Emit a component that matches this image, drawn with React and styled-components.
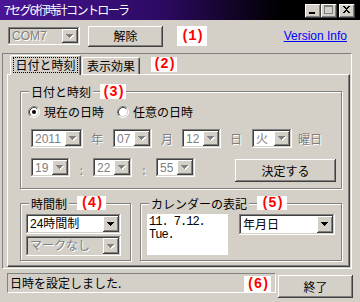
import React from 'react';
import styled, { createGlobalStyle, css } from 'styled-components';

const Global = createGlobalStyle`
  html, body { margin: 0; padding: 0; background: #d4d0c8; }
  body {
    font-family: "Liberation Sans", "Noto Sans CJK JP", sans-serif;
    font-size: 12px;
    color: #000;
  }
`;

const raised = css`
  box-shadow: inset -1px -1px #404040, inset 1px 1px #fff, inset -2px -2px #808080, inset 2px 2px #d4d0c8;
`;
const sunken = css`
  box-shadow: inset -1px -1px #fff, inset 1px 1px #808080, inset -2px -2px #d4d0c8, inset 2px 2px #404040;
`;

const px = v => (typeof v === 'number' ? `${v}px` : v || '0');

const Window = styled.div`
  width: 360px;
  height: 302px;
  display: flex;
  flex-direction: column;
  overflow: hidden;
  background: #d4d0c8;
`;

const TitleBar = styled.div`
  height: 20px;
  flex: none;
  display: flex;
  align-items: flex-start;
  background: linear-gradient(90deg, #4a1698 0%, #2c0a62 45%, #000 78%);
  color: #fff;
  padding-left: 4px;
`;

const TitleText = styled.span`
  flex: 1;
  font-family: "Noto Sans CJK JP", sans-serif;
  font-size: 12px;
  line-height: 19px;
  letter-spacing: -1.6px;
  white-space: nowrap;
`;

const TitleButtons = styled.div`
  display: flex;
  margin-top: 4px;
  margin-right: 5px;
`;

const TitleBtn = styled.div`
  width: 16px;
  height: 14px;
  box-sizing: border-box;
  background: #d4d0c8;
  margin-left: ${p => (p.$gap ? 2 : 0)}px;
  display: flex;
  ${raised}
  svg { display: block; }
`;

const TopRow = styled.div`
  display: flex;
  align-items: center;
  height: 22px;
  margin-top: 5px;
  padding-left: 8px;
`;

const ComboBox = styled.div`
  width: ${p => p.$w}px;
  height: ${p => p.$h}px;
  margin-left: ${p => p.$ml || 0}px;
  margin-top: ${p => p.$mt || 0}px;
  flex: none;
  box-sizing: border-box;
  padding: 2px;
  display: flex;
  background: ${p => p.$bg};
  ${sunken}
`;

const ComboText = styled.div`
  flex: 1;
  min-width: 0;
  padding-left: 2px;
  display: flex;
  align-items: center;
  white-space: nowrap;
  overflow: hidden;
  line-height: 14px;
  color: ${p => (p.$disabled ? '#808080' : '#000')};
  text-shadow: ${p => (p.$disabled ? '1px 1px #fff' : 'none')};
`;

const ComboArrow = styled.div`
  width: 16px;
  flex: none;
  background: #d4d0c8;
  display: flex;
  align-items: center;
  justify-content: center;
  ${raised}
  svg { display: block; }
`;

const PushButton = styled.button`
  width: ${p => p.$w}px;
  height: ${p => p.$h}px;
  margin-left: ${p => p.$ml || 0}px;
  margin-top: ${p => p.$mt || 0}px;
  flex: none;
  border: 0;
  padding: 0;
  background: #d4d0c8;
  font-family: "Noto Sans CJK JP", sans-serif;
  font-size: 12px;
  line-height: 14px;
  color: #000;
  ${raised}
`;

const Tag = styled.div`
  width: ${p => p.$w}px;
  height: ${p => p.$h}px;
  margin-left: ${p => px(p.$ml)};
  flex: none;
  background: #fff;
  color: #ff0000;
  font-family: "Liberation Mono", monospace;
  font-weight: bold;
  font-size: 14px;
  letter-spacing: -1px;
  display: flex;
  align-items: center;
  justify-content: center;
  align-self: ${p => p.$self || 'auto'};
`;

const LinkText = styled.a`
  margin-left: auto;
  margin-right: 13px;
  color: #0000ff;
  text-decoration: underline;
  font-size: 12px;
  line-height: 14px;
  cursor: pointer;
`;

const OuterFrame = styled.div`
  margin-top: 6px;
  margin-left: 2px;
  width: 350px;
  height: 216px;
  box-sizing: border-box;
  border-top: 1px solid #808080;
  border-left: 1px solid #808080;
  border-right: 1px solid #fff;
  border-bottom: 1px solid #fff;
  display: flex;
  flex-direction: column;
`;

const TabStrip = styled.div`
  display: flex;
  align-items: flex-end;
  height: 20px;
  padding-left: 7px;
  position: relative;
  z-index: 1;
`;

const Tab = styled.div`
  height: ${p => (p.$active ? 20 : 17)}px;
  margin-bottom: ${p => (p.$active ? -1 : 0)}px;
  margin-left: ${p => p.$ml || 0}px;
  width: ${p => p.$w}px;
  box-sizing: border-box;
  background: #d4d0c8;
  border-top: 1px solid #fff;
  border-left: 1px solid #fff;
  border-right: 1px solid #404040;
  border-radius: 2px 2px 0 0;
  box-shadow: inset -1px 0 #808080;
  display: flex;
  justify-content: center;
  padding-top: ${p => (p.$active ? 2 : 1)}px;
  font-family: "Noto Sans CJK JP", sans-serif;
  line-height: 14px;
`;

const TabLabel = styled.span`
  padding: 0 1px;
  height: 14px;
  outline: ${p => (p.$focus ? '1px dotted #000' : 'none')};
  outline-offset: 0;
`;

const Panel = styled.div`
  flex: 1;
  margin-left: 4px;
  margin-right: 1px;
  margin-bottom: 1px;
  box-sizing: border-box;
  border-top: 1px solid #fff;
  border-left: 1px solid #fff;
  border-right: 1px solid #404040;
  border-bottom: 1px solid #404040;
  box-shadow: inset -1px -1px #808080;
  display: flex;
  flex-direction: column;
  padding-left: 12px;
`;

const Group = styled.div`
  position: relative;
  box-sizing: border-box;
  width: ${p => p.$w}px;
  height: ${p => p.$h}px;
  margin-top: ${p => p.$mt || 0}px;
  margin-left: ${p => p.$ml || 0}px;
  border: 1px solid #808080;
  box-shadow: inset 1px 1px #fff, 1px 1px #fff;
  padding-top: 1px;
  padding-left: 1px;
  flex: none;
`;

const Legend = styled.div`
  position: absolute;
  top: -8px;
  left: 8px;
  display: flex;
  align-items: flex-start;
  height: 16px;
`;

const LegendText = styled.span`
  background: #d4d0c8;
  padding: 0 2px;
  font-family: "Noto Sans CJK JP", sans-serif;
  line-height: 14px;
  margin-top: 1px;
`;

const GroupRow = styled.div`
  display: flex;
`;

const RadioRow = styled.div`
  display: flex;
  align-items: center;
  margin-top: 12px;
  margin-left: 6px;
  height: 13px;
`;

const RadioLabel = styled.label`
  display: flex;
  align-items: center;
  margin-left: ${p => p.$ml || 0}px;
  font-family: "Noto Sans CJK JP", sans-serif;
  line-height: 14px;
  svg { display: block; margin-right: 4px; }
`;

const FieldRow = styled.div`
  display: flex;
  align-items: ${p => p.$align || 'center'};
  margin-top: ${p => p.$mt || 0}px;
  margin-left: 9px;
`;

const Unit = styled.span`
  margin-left: ${p => p.$ml || 0}px;
  width: ${p => (p.$w ? `${p.$w}px` : 'auto')};
  text-align: center;
  align-self: center;
  color: #808080;
  text-shadow: 1px 1px #fff;
  font-family: "Noto Sans CJK JP", sans-serif;
  line-height: 14px;
  flex: none;
`;

const CalBox = styled.div`
  width: 81px;
  height: 41px;
  margin-left: 5px;
  margin-top: 9px;
  background: #fff;
  box-sizing: border-box;
  padding: 2px 0 0 2px;
  font-family: "Liberation Mono", "Noto Sans CJK JP", monospace;
  font-size: 12px;
  letter-spacing: -1px;
  line-height: 13px;
  white-space: pre;
`;

const BottomRow = styled.div`
  display: flex;
  align-items: flex-start;
  margin-top: 4px;
  padding-left: 7px;
`;

const StatusBar = styled.div`
  width: 269px;
  height: 20px;
  box-sizing: border-box;
  border-top: 1px solid #808080;
  border-left: 1px solid #808080;
  border-right: 1px solid #fff;
  border-bottom: 1px solid #fff;
  display: flex;
  padding-left: 2px;
  padding-right: 4px;
`;

const StatusText = styled.span`
  font-family: "Noto Sans CJK JP", sans-serif;
  line-height: 14px;
  margin-top: 2px;
`;

function Arrow({ disabled }) {
  const c = disabled ? '#808080' : '#000';
  const tri = (dx, dy, fill) => (
    <g fill={fill} transform={`translate(${dx} ${dy})`}>
      <rect x="0" y="0" width="7" height="1" />
      <rect x="1" y="1" width="5" height="1" />
      <rect x="2" y="2" width="3" height="1" />
      <rect x="3" y="3" width="1" height="1" />
    </g>
  );
  return (
    <svg width="8" height="5" viewBox="0 0 8 5" shapeRendering="crispEdges">
      {disabled && tri(1, 1, '#fff')}
      {tri(0, 0, c)}
    </svg>
  );
}

function Combo({ w, h, ml, mt, disabled, white, value }) {
  const bg = disabled && !white ? '#d4d0c8' : '#fff';
  return (
    <ComboBox $w={w} $h={h} $ml={ml} $mt={mt} $bg={bg}>
      <ComboText $disabled={disabled}>{value}</ComboText>
      <ComboArrow>
        <Arrow disabled={disabled} />
      </ComboArrow>
    </ComboBox>
  );
}

function Radio({ checked }) {
  return (
    <svg width="12" height="12" viewBox="0 0 12 12">
      <circle cx="6" cy="6" r="5" fill="#fff" />
      <path d="M2.11 9.89 A5.5 5.5 0 0 1 9.89 2.11" stroke="#808080" fill="none" />
      <path d="M9.89 2.11 A5.5 5.5 0 0 1 2.11 9.89" stroke="#fff" fill="none" />
      <path d="M2.82 9.18 A4.5 4.5 0 0 1 9.18 2.82" stroke="#404040" fill="none" />
      <path d="M9.18 2.82 A4.5 4.5 0 0 1 2.82 9.18" stroke="#d4d0c8" fill="none" />
      {checked && <circle cx="6" cy="6" r="2" fill="#000" />}
    </svg>
  );
}

const MinIcon = () => (
  <svg width="14" height="12" viewBox="0 0 14 12" shapeRendering="crispEdges">
    <rect x="4" y="8" width="6" height="2" fill="#000" />
  </svg>
);
const MaxIcon = () => (
  <svg width="14" height="12" viewBox="0 0 14 12" shapeRendering="crispEdges">
    <rect x="3.5" y="1.5" width="8" height="8" fill="none" stroke="#808080" strokeWidth="1" />
    <rect x="3" y="1" width="9" height="2" fill="#808080" />
  </svg>
);
const CloseIcon = () => (
  <svg width="14" height="12" viewBox="0 0 14 12" shapeRendering="crispEdges">
    <path d="M4 2h2v1h1v1h1v-1h1v-1h2v1h-1v1h-1v1h-1v1h1v1h1v1h1v1h-2v-1h-1v-1h-1v1h-1v1h-2v-1h1v-1h1v-1h1v-1h-1v-1h-1v-1h-1z" fill="#000" />
  </svg>
);

export default function App() {
  return (
    <>
      <Global />
      <Window>
        <TitleBar>
          <TitleText>7セグ6桁時計コントローラ</TitleText>
          <TitleButtons>
            <TitleBtn><MinIcon /></TitleBtn>
            <TitleBtn><MaxIcon /></TitleBtn>
            <TitleBtn $gap><CloseIcon /></TitleBtn>
          </TitleButtons>
        </TitleBar>

        <TopRow>
          <Combo w={72} h={18} disabled value="COM7" />
          <PushButton $w={75} $h={21} $ml={8}>解除</PushButton>
          <Tag $w={30} $h={20} $ml={14}>(1)</Tag>
          <LinkText>Version Info</LinkText>
        </TopRow>

        <OuterFrame>
          <TabStrip>
            <Tab $active $w={71}><TabLabel $focus>日付と時刻</TabLabel></Tab>
            <Tab $w={58} $ml={1}><TabLabel>表示効果</TabLabel></Tab>
            <Tag $w={26} $h={15} $ml={11} $self="center">(2)</Tag>
          </TabStrip>
          <Panel>
            <Group $w={322} $h={98} $mt={16}>
              <Legend>
                <LegendText>日付と時刻</LegendText>
                <Tag $w={26} $h={15} $ml={7}>(3)</Tag>
              </Legend>
              <RadioRow>
                <RadioLabel><Radio checked />現在の日時</RadioLabel>
                <RadioLabel $ml={13}><Radio />任意の日時</RadioLabel>
              </RadioRow>
              <FieldRow $mt={11}>
                <Combo w={52} h={19} disabled white value="2011" />
                <Unit $ml={8}>年</Unit>
                <Combo w={39} h={19} ml={10} disabled white value="07" />
                <Unit $ml={9}>月</Unit>
                <Combo w={39} h={19} ml={9} disabled white value="12" />
                <Unit $ml={9}>日</Unit>
                <Combo w={40} h={19} ml={10} disabled white value="火" />
                <Unit $ml={6}>曜日</Unit>
              </FieldRow>
              <FieldRow $mt={10} $align="flex-start">
                <Combo w={39} h={19} disabled white value="19" />
                <Unit $w={23}>:</Unit>
                <Combo w={39} h={19} disabled white value="22" />
                <Unit $w={24}>:</Unit>
                <Combo w={39} h={19} disabled white value="55" />
                <PushButton $w={101} $h={23} $ml={40} $mt={1}>決定する</PushButton>
              </FieldRow>
            </Group>

            <GroupRow>
              <Group $w={111} $h={58} $mt={14}>
                <Legend>
                  <LegendText>時間制</LegendText>
                  <Tag $w={29} $h={14} $ml={8}>(4)</Tag>
                </Legend>
                <Combo w={95} h={20} ml={4} mt={9} value="24時間制" />
                <Combo w={95} h={20} ml={4} mt={2} disabled value="マークなし" />
              </Group>
              <Group $w={202} $h={58} $mt={14} $ml={9}>
                <Legend>
                  <LegendText>カレンダーの表記</LegendText>
                  <Tag $w={30} $h={14} $ml={8}>(5)</Tag>
                </Legend>
                <GroupRow>
                  <CalBox>{'11. 7.12.\nTue.'}</CalBox>
                  <Combo w={96} h={21} ml={11} mt={9} value="年月日" />
                </GroupRow>
              </Group>
            </GroupRow>
          </Panel>
        </OuterFrame>

        <BottomRow>
          <StatusBar>
            <StatusText>日時を設定しました.</StatusText>
            <Tag $w={27} $h={16} $ml="auto" $self="flex-end">(6)</Tag>
          </StatusBar>
          <PushButton $w={75} $h={23} $ml={2} $mt={2}>終了</PushButton>
        </BottomRow>
      </Window>
    </>
  );
}
